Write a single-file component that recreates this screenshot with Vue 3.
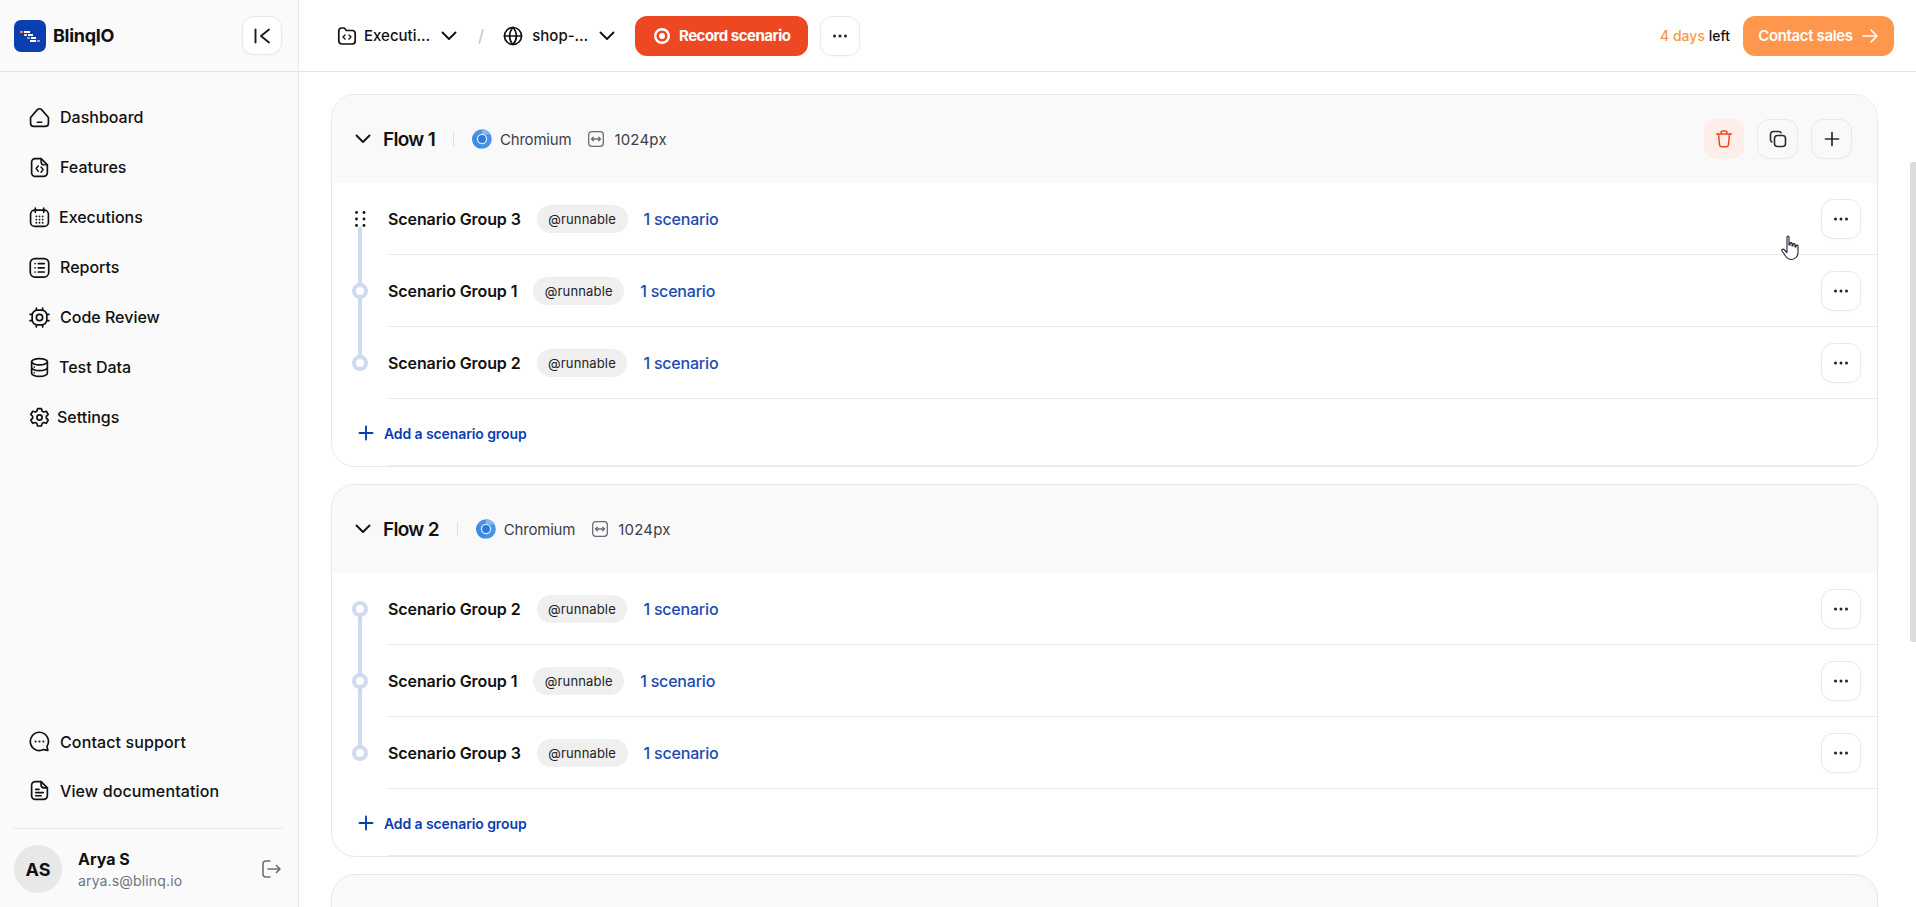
<script setup>
const nav = [
  { label: 'Dashboard', icon: 'home', gap: 10 },
  { label: 'Features', icon: 'file', gap: 10 },
  { label: 'Executions', icon: 'cal', gap: 9 },
  { label: 'Reports', icon: 'list', gap: 10 },
  { label: 'Code Review', icon: 'chip', gap: 10 },
  { label: 'Test Data', icon: 'db', gap: 9 },
  { label: 'Settings', icon: 'gear', gap: 7 },
]
const flows = [
  { name: 'Flow 1', actions: true, groups: [3, 1, 2] },
  { name: 'Flow 2', actions: false, groups: [2, 1, 3] },
]
</script>

<template>
  <div class="app">
    <aside class="side">
      <div class="brand">
        <div class="brand-left">
          <svg class="logo" viewBox="0 0 32 32">
            <rect width="32" height="32" rx="7" fill="#0b3fb0" />
            <rect x="6" y="11" width="3" height="2" fill="#f08a4b" />
            <rect x="10" y="11" width="6" height="2" fill="#fff" />
            <rect x="14" y="14" width="5" height="2" fill="#fff" />
            <rect x="10" y="14" width="3" height="2" fill="#cdd8f2" />
            <rect x="13" y="17" width="3" height="2" fill="#f08a4b" />
            <rect x="17" y="17" width="5" height="2" fill="#fff" />
            <rect x="16" y="20" width="6" height="2" fill="#fff" />
            <rect x="23" y="20" width="3" height="2" fill="#f08a4b" />
          </svg>
          <span class="brand-name">BlinqIO</span>
        </div>
        <button class="icon-btn collapse">
          <svg width="20" height="20" viewBox="0 0 20 20" fill="none" stroke="#1b1b1f" stroke-width="1.900" stroke-linecap="round" stroke-linejoin="round">
            <path d="M3.500 3.500v13M17 3.500 9 10l8 6.500" />
          </svg>
        </button>
      </div>

      <nav class="nav">
        <a v-for="n in nav" :key="n.label" class="nav-item" :style="{ gap: n.gap + 'px' }">
          <svg class="nav-ico" viewBox="0 0 20 20" fill="none" stroke="#111" stroke-width="1.600" stroke-linecap="round" stroke-linejoin="round">
            <template v-if="n.icon === 'home'">
              <path d="M1.500 10 8 2.500c1-1.100 3-1.100 4 0L18.500 10v5.500a3 3 0 0 1-3 3h-11a3 3 0 0 1-3-3Z" />
              <path d="M8 14.500h4" />
            </template>
            <template v-else-if="n.icon === 'file'">
              <path d="M11.500 1.500H6a3.500 3.500 0 0 0-3.500 3.500v10A3.500 3.500 0 0 0 6 18.500h8a3.500 3.500 0 0 0 3.500-3.500V7.500Z" />
              <path d="M11.500 1.500v3a3 3 0 0 0 3 3h3M8.800 8.500 6.800 11l2 2.500M11.500 9.500l2 2.500-2 2.500" stroke-width="1.400" />
            </template>
            <template v-else-if="n.icon === 'cal'">
              <rect x="1.500" y="3" width="17" height="15.500" rx="4" />
              <path d="M6 1v4M14 1v4" />
              <path d="M7 9h.01M10 9h.01M13 9h.01M7 12h.01M10 12h.01M13 12h.01M7 15h.01M10 15h.01M13 15h.01" stroke-width="1.700" />
            </template>
            <template v-else-if="n.icon === 'list'">
              <rect x="1.200" y="1.500" width="17.600" height="17.600" rx="4.500" />
              <path d="M5.800 6.300h.01M5.800 10.300h.01M5.800 14.300h.01M8.800 6.300h5.700M8.800 10.300h5.700M8.800 14.300h5.700" />
            </template>
            <template v-else-if="n.icon === 'chip'">
              <rect x="3" y="3" width="14" height="14" rx="5" />
              <circle cx="10" cy="10" r="3" />
              <path d="M7 1v2M13 1v2M7 17v2M13 17v2M1 7h2M1 13h2M17 7h2M17 13h2" />
            </template>
            <template v-else-if="n.icon === 'db'">
              <ellipse cx="10" cy="4.500" rx="7.500" ry="3" />
              <path d="M2.500 4.500v11c0 1.700 3.400 3 7.500 3s7.500-1.300 7.500-3v-11M2.500 10c0 1.700 3.400 3 7.500 3s7.500-1.300 7.500-3M5 9.500h.01M5 15h.01" />
            </template>
            <template v-else>
              <path d="M8.200 1.500h3.600l.7 2.500 1.500.8 2.500-.7 1.800 3-1.800 1.900v1.600l1.800 1.900-1.800 3-2.500-.7-1.500.8-.7 2.500H8.200l-.7-2.500-1.500-.8-2.500.7-1.800-3 1.800-1.900V9l-1.800-1.900 1.800-3 2.500.7L7.500 4Z" />
              <circle cx="10" cy="10" r="2.500" />
            </template>
          </svg>
          <span>{{ n.label }}</span>
        </a>
      </nav>

      <div class="side-bottom">
        <a class="nav-item bottom-item">
          <svg class="nav-ico" viewBox="0 0 20 20" fill="none" stroke="#111" stroke-width="1.600" stroke-linecap="round" stroke-linejoin="round">
            <path d="M10 1.200a8.700 8.700 0 1 0 3.800 16.500l4.200.8-.9-3.900A8.700 8.700 0 0 0 10 1.200Z" />
            <path d="M6.300 10h.01M10 10h.01M13.700 10h.01" stroke-width="2" />
          </svg>
          <span>Contact support</span>
        </a>
        <a class="nav-item bottom-item">
          <svg class="nav-ico" viewBox="0 0 20 20" fill="none" stroke="#111" stroke-width="1.600" stroke-linecap="round" stroke-linejoin="round">
            <path d="M11.500 1.500H6a3.500 3.500 0 0 0-3.500 3.500v10A3.500 3.500 0 0 0 6 18.500h8a3.500 3.500 0 0 0 3.500-3.500V7.500Z" />
            <path d="M11.500 1.500v3a3 3 0 0 0 3 3h3M6.500 9h3M6.500 12h7M6.500 15h5" />
          </svg>
          <span>View documentation</span>
        </a>
        <div class="user">
          <div class="avatar">AS</div>
          <div class="user-info">
            <div class="user-name">Arya S</div>
            <div class="user-mail">arya.s@blinq.io</div>
          </div>
          <svg class="logout" width="22" height="22" viewBox="0 0 22 22" fill="none" stroke="#6f6f76" stroke-width="1.600" stroke-linecap="round" stroke-linejoin="round">
            <path d="M10 3H6a3 3 0 0 0-3 3v10a3 3 0 0 0 3 3h4M8 11h12M16.500 7.500 20 11l-3.500 3.500" />
          </svg>
        </div>
      </div>
    </aside>

    <div class="right">
      <header class="top">
        <div class="crumb crumb-a">
          <svg width="20" height="20" viewBox="0 0 20 20" fill="none" stroke="#111" stroke-width="1.700" stroke-linecap="round" stroke-linejoin="round">
            <path d="M1.800 5a3 3 0 0 1 3-3h2.400l2.200 2.500h5.800a3 3 0 0 1 3 3V15a3 3 0 0 1-3 3H4.800a3 3 0 0 1-3-3Z" />
            <path d="M8 9 6 11l2 2M12 9l2 2-2 2" stroke-width="1.400" />
          </svg>
          <span class="crumb-text">Executi…</span>
          <svg class="chev" width="20" height="20" viewBox="0 0 20 20" fill="none" stroke="#111" stroke-width="1.900" stroke-linecap="round" stroke-linejoin="round"><path d="m3.500 6.500 6.500 6.500 6.500-6.500" /></svg>
        </div>
        <span class="slash">/</span>
        <div class="crumb crumb-b">
          <svg width="20" height="20" viewBox="0 0 20 20" fill="none" stroke="#111" stroke-width="1.700" stroke-linecap="round" stroke-linejoin="round">
            <circle cx="10" cy="10" r="8.500" />
            <path d="M1.500 10h17M10 1.500c-4.500 4.800-4.500 12.200 0 17M10 1.500c4.500 4.800 4.500 12.200 0 17" />
          </svg>
          <span class="crumb-text">shop-…</span>
          <svg class="chev" width="20" height="20" viewBox="0 0 20 20" fill="none" stroke="#111" stroke-width="1.900" stroke-linecap="round" stroke-linejoin="round"><path d="m3.500 6.500 6.500 6.500 6.500-6.500" /></svg>
        </div>
        <button class="record">
          <svg width="18" height="18" viewBox="0 0 18 18" fill="none">
            <circle cx="9" cy="9" r="6.800" stroke="#fff" stroke-width="2.400" />
            <circle cx="9" cy="9" r="3" fill="#fff" />
          </svg>
          <span>Record scenario</span>
        </button>
        <button class="icon-btn more-top">
          <svg width="16" height="4" viewBox="0 0 16 4" fill="#222"><circle cx="2.500" cy="2" r="1.500" /><circle cx="8" cy="2" r="1.500" /><circle cx="13.500" cy="2" r="1.500" /></svg>
        </button>
        <div class="trial"><span class="days">4 days</span> <span>left</span></div>
        <button class="contact">
          <span>Contact sales</span>
          <svg width="18" height="18" viewBox="0 0 18 18" fill="none" stroke="#fff" stroke-width="1.700" stroke-linecap="round" stroke-linejoin="round"><path d="M2 9h14M10 3l6 6-6 6" /></svg>
        </button>
      </header>

      <main class="main">
        <section v-for="f in flows" :key="f.name" class="card">
          <div class="card-head">
            <svg class="head-chev" width="20" height="20" viewBox="0 0 20 20" fill="none" stroke="#111" stroke-width="1.900" stroke-linecap="round" stroke-linejoin="round"><path d="m3.500 6.500 6.500 6.500 6.500-6.500" /></svg>
            <span class="flow-name">{{ f.name }}</span>
            <span class="vsep"></span>
            <svg class="chrome" width="20" height="20" viewBox="0 0 20 20">
              <circle cx="10" cy="10" r="9.800" fill="#4a94e8" />
              <path d="M10 .2a9.800 9.800 0 0 1 8.700 5.300H10Z" fill="#82b9f1" />
              <path d="M1.300 5.500A9.800 9.800 0 0 0 8 19.600L11 14Z" fill="#3f8ae3" />
              <circle cx="10" cy="10" r="5.200" fill="#d8e9fa" />
              <circle cx="10" cy="10" r="3.900" fill="#2f78d8" />
            </svg>
            <span class="meta meta-browser">Chromium</span>
            <svg class="size-ico" width="16" height="16" viewBox="0 0 16 16" fill="none" stroke="#6b6b73" stroke-width="1.300" stroke-linecap="round" stroke-linejoin="round">
              <rect x=".7" y=".7" width="14.600" height="14.600" rx="3" />
              <path d="M3.500 8h9M5.300 6.200 3.500 8l1.800 1.800M10.700 6.200 12.500 8l-1.800 1.800" />
            </svg>
            <span class="meta meta-size">1024px</span>
            <div v-if="f.actions" class="head-actions">
              <button class="head-btn danger">
                <svg width="20" height="20" viewBox="0 0 20 20" fill="none" stroke="#ee4822" stroke-width="1.500" stroke-linecap="round" stroke-linejoin="round">
                  <path d="M2.500 5h15M7 5V4a2 2 0 0 1 2-2h2a2 2 0 0 1 2 2v1M4.500 5l1 10.500a2.500 2.500 0 0 0 2.500 2.300h4a2.500 2.500 0 0 0 2.500-2.300L15.500 5" />
                </svg>
              </button>
              <button class="head-btn">
                <svg width="20" height="20" viewBox="0 0 20 20" fill="none" stroke="#2a2a30" stroke-width="1.600" stroke-linecap="round" stroke-linejoin="round">
                  <rect x="6.500" y="6.500" width="11" height="11" rx="3" />
                  <path d="M13 3.800A2.500 2.500 0 0 0 11 2.500H5.500a3 3 0 0 0-3 3V11a2.500 2.500 0 0 0 1.300 2" />
                </svg>
              </button>
              <button class="head-btn">
                <svg width="20" height="20" viewBox="0 0 20 20" fill="none" stroke="#2a2a30" stroke-width="1.700" stroke-linecap="round"><path d="M10 3.500v13M3.500 10h13" /></svg>
              </button>
            </div>
          </div>

          <div v-for="(g, i) in f.groups" :key="g" class="row">
            <div class="gutter" :class="{ first: i === 0 }">
              <svg v-if="f.actions && i === 0" class="grip" width="11" height="16" viewBox="0 0 11 16" fill="#111">
                <circle cx="1.500" cy="1.500" r="1.400" /><circle cx="9" cy="1.500" r="1.400" />
                <circle cx="1.500" cy="8" r="1.400" /><circle cx="9" cy="8" r="1.400" />
                <circle cx="1.500" cy="14.500" r="1.400" /><circle cx="9" cy="14.500" r="1.400" />
              </svg>
              <span v-else class="dot"></span>
            </div>
            <div class="row-body">
              <span class="group-name">Scenario Group {{ g }}</span>
              <span class="pill">@runnable</span>
              <span class="count">1 scenario</span>
              <button class="icon-btn row-more">
                <svg width="16" height="4" viewBox="0 0 16 4" fill="#222"><circle cx="2.500" cy="2" r="1.500" /><circle cx="8" cy="2" r="1.500" /><circle cx="13.500" cy="2" r="1.500" /></svg>
              </button>
            </div>
          </div>

          <div class="add-row">
            <svg width="16" height="16" viewBox="0 0 16 16" fill="none" stroke="#0b3fb0" stroke-width="1.900" stroke-linecap="round"><path d="M8 1.500v13M1.500 8h13" /></svg>
            <span>Add a scenario group</span>
          </div>
        </section>
        <section class="card card-peek"></section>
      </main>
      <div class="scrollbar"></div>
      <svg class="cursor" width="20" height="26" viewBox="0 0 20 26" fill="#fff" stroke="#1a2238" stroke-width="1.100" stroke-linejoin="round">
        <path d="M6 2c0-1.300 2-1.300 2 0v8l1 0V8.500c0-1.200 2-1.200 2 0V11l1 0V9.500c0-1.200 2-1.200 2 0V12l1 0v-1c0-1.200 2-1.200 2 0v6c0 4-2.500 7.500-6.500 7.500-3 0-4.500-1.300-6-3.500L1 16c-.8-1.300.8-2.500 2-1.500l3 3Z" />
      </svg>
    </div>
  </div>
</template>

<style>
html, body { margin: 0; height: 100%; overflow: hidden; background: #fff; }
</style>

<style scoped>
.app {
  display: flex;
  height: 907px;
  width: 1916px;
  overflow: hidden;
  font-family: "Inter", "Noto Sans", sans-serif;
  color: #111;
}
button { font-family: inherit; cursor: pointer; }
.side {
  width: 299px;
  flex: none;
  box-sizing: border-box;
  background: #fafafa;
  border-right: 1px solid #e7e7e7;
  display: flex;
  flex-direction: column;
}
.brand {
  height: 72px;
  box-sizing: border-box;
  border-bottom: 1px solid #e4e4e4;
  display: flex;
  align-items: center;
  justify-content: space-between;
  padding: 0 16px 0 14px;
}
.brand-left { display: flex; align-items: center; gap: 7px; }
.logo { width: 32px; height: 32px; display: block; }
.brand-name { font-size: 18px; font-weight: 700; letter-spacing: -0.3px; }
.icon-btn {
  display: flex;
  align-items: center;
  justify-content: center;
  background: #fff;
  border: 1px solid #e9e9e9;
  border-radius: 10px;
  padding: 0;
  box-shadow: 0 1px 2px rgba(0, 0, 0, .03);
}
.collapse { width: 40px; height: 39px; border-radius: 12px; }
.nav { padding-top: 20px; padding-left: 29px; display: flex; flex-direction: column; }
.nav-item {
  height: 50px;
  display: flex;
  align-items: center;
  gap: 14px;
  font-size: 16px;
  font-weight: 500;
  letter-spacing: 0;
}
.nav-ico { width: 21px; height: 21px; flex: none; }
.side-bottom { margin-top: auto; display: flex; flex-direction: column; }
.bottom-item { height: 49px; padding-left: 29px; gap: 10px; letter-spacing: 0.12px; }
.user {
  margin: 13px 16px 0 14px;
  border-top: 1px solid #e4e4e4;
  padding: 16px 0 14px;
  display: flex;
  align-items: center;
  gap: 16px;
}
.avatar {
  width: 48px;
  height: 48px;
  border-radius: 50%;
  background: #e8e8e8;
  display: flex;
  align-items: center;
  justify-content: center;
  font-size: 18px;
  font-weight: 700;
}
.user-info { display: flex; flex-direction: column; gap: 3px; padding-top: 1px; }
.user-name { font-size: 16px; font-weight: 700; line-height: 20px; }
.user-mail { font-size: 14px; color: #6f7480; line-height: 18px; letter-spacing: 0.15px; }
.logout { margin-left: auto; }

.right { flex: 1; min-width: 0; position: relative; display: flex; flex-direction: column; }
.top {
  height: 72px;
  flex: none;
  box-sizing: border-box;
  border-bottom: 1px solid #e4e4e4;
  display: flex;
  align-items: center;
  padding: 0 22px 0 38px;
  background: #fff;
}
.crumb { display: flex; align-items: center; }
.crumb-text { font-size: 15px; font-weight: 500; margin-left: 7px; }
.crumb-b .crumb-text { margin-left: 9px; }
.chev { margin-left: 9px; }
.slash { color: #c4c4c4; font-size: 17px; margin: 0 19px 0 19px; }
.record {
  margin-left: 18px;
  height: 40px;
  width: 173px;
  border: 0;
  border-radius: 12px;
  background: #ee4822;
  color: #fff;
  font-size: 15px;
  font-weight: 700;
  letter-spacing: -0.5px;
  display: flex;
  align-items: center;
  justify-content: center;
  gap: 8px;
}
.more-top { margin-left: 12px; width: 40px; height: 40px; border-radius: 12px; }
.trial { margin-left: auto; font-size: 14px; font-weight: 500; }
.days { color: #fb9749; }
.contact {
  margin-left: 13px;
  height: 40px;
  width: 151px;
  border: 0;
  border-radius: 12px;
  background: #fe974b;
  color: #fff;
  font-size: 15px;
  font-weight: 600;
  letter-spacing: -0.35px;
  display: flex;
  align-items: center;
  justify-content: center;
  gap: 8px;
}

.main {
  flex: 1;
  overflow: hidden;
  padding: 22px 38px 0 32px;
  display: flex;
  flex-direction: column;
  gap: 17px;
}
.card {
  flex: none;
  border: 1px solid #e8e8e8;
  border-radius: 24px;
  overflow: hidden;
  background: #fff;
  box-sizing: border-box;
  height: 373px;
}
.card-peek { background: #f9f9f9; height: 120px; }
.card-head {
  height: 88px;
  background: #f9f9f9;
  display: flex;
  align-items: center;
  padding: 0 25px 0 21px;
}
.head-chev { margin-right: 10px; }
.flow-name { font-size: 19px; font-weight: 600; letter-spacing: -0.7px; }
.vsep { width: 1px; height: 14px; background: #ddd; margin: 0 18px 0 18px; }
.chrome { margin-right: 8px; }
.meta { font-size: 15px; color: #3c3f4a; }
.meta-browser { margin-right: 17px; letter-spacing: -0.2px; }
.meta-size { letter-spacing: 0.2px; }
.size-ico { margin-right: 10px; }
.head-actions { margin-left: auto; display: flex; gap: 13px; }
.head-btn {
  width: 41px;
  height: 40px;
  padding: 0;
  display: flex;
  align-items: center;
  justify-content: center;
  background: #f9f9f9;
  border: 1px solid #e8e8e8;
  border-radius: 12px;
}
.head-btn.danger { background: #fdeee9; border-color: #fdeee9; width: 40px; }

.row { display: flex; height: 72px; }
.gutter {
  width: 56px;
  flex: none;
  position: relative;
  display: flex;
  align-items: center;
  justify-content: center;
  box-sizing: border-box;
}
.gutter::before {
  content: "";
  position: absolute;
  left: 26px;
  width: 4px;
  top: -36px;
  height: 72px;
  background: #cfd9f0;
}
.gutter.first::before { display: none; }
.dot {
  width: 16px;
  height: 16px;
  box-sizing: border-box;
  border-radius: 50%;
  border: 4px solid #cfd9f0;
  background: #fff;
  position: relative;
  z-index: 1;
}
.grip { position: relative; z-index: 1; background: #fff; }
.row-body {
  flex: 1;
  min-width: 0;
  display: flex;
  align-items: center;
  border-bottom: 1px solid #e8e8e8;
  padding-right: 16px;
}
.group-name { font-size: 16px; font-weight: 600; letter-spacing: -0.1px; }
.pill {
  margin-left: 16px;
  height: 28px;
  padding: 0 11.500px;
  border-radius: 14px;
  background: #efefef;
  display: flex;
  align-items: center;
  font-size: 13px;
  letter-spacing: 0.15px;
  color: #222;
}
.count { margin-left: 16px; font-size: 16px; font-weight: 500; color: #1c4bb0; letter-spacing: -0.2px; }
.row-more { margin-left: auto; width: 40px; height: 40px; border-radius: 12px; }
.add-row {
  height: 68px;
  position: relative;
  display: flex;
  align-items: center;
  padding-left: 26px;
  gap: 10px;
  font-size: 14px;
  font-weight: 600;
  letter-spacing: -0.1px;
  color: #0b3fb0;
}
.add-row::after {
  content: "";
  position: absolute;
  left: 56px;
  right: 0;
  bottom: 0;
  height: 2px;
  background: #ececec;
}
.scrollbar {
  position: absolute;
  right: 0;
  top: 162px;
  width: 6px;
  height: 480px;
  background: #dcdcdc;
  border-radius: 3px 0 0 3px;
}
.cursor { position: absolute; left: 1482px; top: 235px; }
</style>
